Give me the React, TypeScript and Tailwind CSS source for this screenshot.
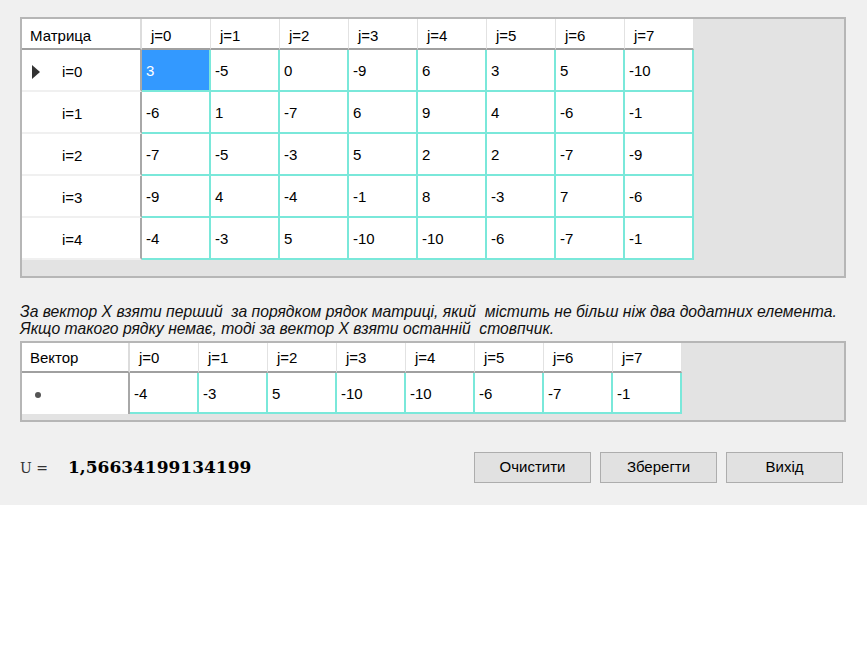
import React from 'react';

const MATRIX = [
  [3, -5, 0, -9, 6, 3, 5, -10],
  [-6, 1, -7, 6, 9, 4, -6, -1],
  [-7, -5, -3, 5, 2, 2, -7, -9],
  [-9, 4, -4, -1, 8, -3, 7, -6],
  [-4, -3, 5, -10, -10, -6, -7, -1],
];

const VECTOR = [-4, -3, 5, -10, -10, -6, -7, -1];
const COLS = [0, 1, 2, 3, 4, 5, 6, 7];

const sans = { fontFamily: '"Liberation Sans", Arial, sans-serif' };

const MatrixGrid: React.FC = () => (
  <div className="w-[826px] h-[261px] bg-[#e3e3e3] border-2 border-[#b6b6b6] flex flex-col">
    <div className="flex h-[31px]">
      <div className="w-[120px] h-full bg-white border-b-2 border-r-2 border-b-[#a0a0a0] border-r-[#dcdcdc] flex items-center pl-[8px] pt-[5px]">
        Матрица
      </div>
      {COLS.map((j) => (
        <div
          key={j}
          className="w-[69px] h-full bg-white border-b-2 border-r border-b-[#a0a0a0] border-r-[#e2e2e2] flex items-center pl-[9px] pt-[5px]"
        >
          j={j}
        </div>
      ))}
    </div>
    {MATRIX.map((row, i) => (
      <div key={i} className="flex h-[42px]">
        <div className="w-[120px] h-full bg-white border-r-2 border-b-2 border-r-[#a8a8a8] border-b-[#f0f0f0] flex items-center pt-[3px]">
          <div className="w-[40px] flex items-center pl-[10px]">
            {i === 0 && (
              <svg width="8" height="14" viewBox="0 0 8 14">
                <polygon points="0,0 8,7 0,14" fill="#333333" />
              </svg>
            )}
          </div>
          <span className="pt-[2px]">i={i}</span>
        </div>
        {row.map((v, j) => (
          <div
            key={j}
            className={
              i === 0 && j === 0
                ? 'w-[69px] h-full bg-[#3399ff] text-white border-r-2 border-b-2 border-[#7ae8da] flex items-center pl-[4px] pt-[3px]'
                : 'w-[69px] h-full bg-white border-r-2 border-b-2 border-[#7ae8da] flex items-center pl-[4px] pt-[3px]'
            }
          >
            {v}
          </div>
        ))}
      </div>
    ))}
  </div>
);

const VectorGrid: React.FC = () => (
  <div className="w-[826px] h-[81px] bg-[#e3e3e3] border-2 border-[#b6b6b6] flex flex-col">
    <div className="flex h-[30px]">
      <div className="w-[108px] h-full bg-white border-b-2 border-r-2 border-b-[#a0a0a0] border-r-[#dcdcdc] flex items-center pl-[8px] pt-[3px]">
        Вектор
      </div>
      {COLS.map((j) => (
        <div
          key={j}
          className="w-[69px] h-full bg-white border-b-2 border-r border-b-[#a0a0a0] border-r-[#e2e2e2] flex items-center pl-[9px] pt-[3px]"
        >
          j={j}
        </div>
      ))}
    </div>
    <div className="flex h-[41px]">
      <div className="w-[108px] h-full bg-white border-r-2 border-r-[#a8a8a8] flex items-center pl-[13px] pt-[3px]">
        <div className="w-[6px] h-[6px] rounded-full bg-[#555555]" />
      </div>
      {VECTOR.map((v, j) => (
        <div key={j} className="w-[69px] h-full bg-white border-r-2 border-b-2 border-[#7ae8da] flex items-center pl-[4px] pt-[3px]">
          {v}
        </div>
      ))}
    </div>
  </div>
);

export default function App() {
  return (
    <div className="w-[867px] h-[658px] bg-white text-[15px] text-black" style={sans}>
      <div className="h-[505px] bg-[#f0f0f0] pt-[17px] pl-[20px] flex flex-col">
        <MatrixGrid />

        <div className="mt-[25px] italic text-[15.7px] leading-[17px] whitespace-pre text-[#111111]">
          <div>За вектор X взяти перший  за порядком рядок матриці, який  містить не більш ніж два додатних елемента.</div>
          <div>Якщо такого рядку немає, тоді за вектор X взяти останній  стовпчик.</div>
        </div>

        <div className="mt-[4px]">
          <VectorGrid />
        </div>

        <div className="mt-[30px] flex items-center w-[826px]">
          <div className="flex items-baseline" style={{ fontFamily: '"DejaVu Serif", "Liberation Serif", serif' }}>
            <span className="text-[14px] text-[#333333]">U =</span>
            <span className="ml-[20px] text-[17px] font-bold">1,56634199134199</span>
          </div>
          <div className="ml-auto flex gap-[9px] pr-[3px]">
            <button className="w-[117px] h-[31px] bg-[#e1e1e1] border border-[#adadad] flex items-center justify-center">
              Очистити
            </button>
            <button className="w-[117px] h-[31px] bg-[#e1e1e1] border border-[#adadad] flex items-center justify-center">
              Зберегти
            </button>
            <button className="w-[117px] h-[31px] bg-[#e1e1e1] border border-[#adadad] flex items-center justify-center">
              Вихід
            </button>
          </div>
        </div>
      </div>
    </div>
  );
}
